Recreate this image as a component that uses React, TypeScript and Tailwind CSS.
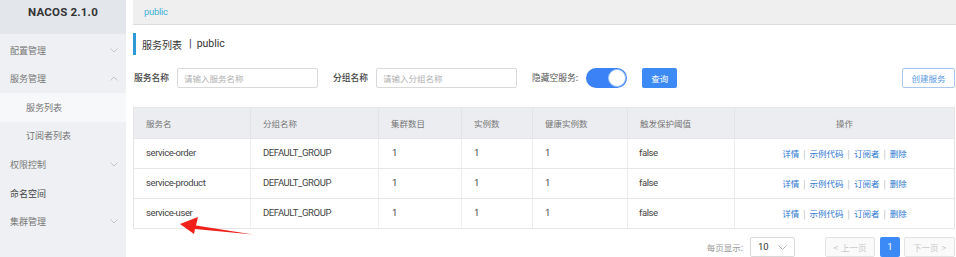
import React from "react";

const font = { fontFamily: '"Roboto", "Noto Sans CJK SC", sans-serif' };
const cjk = { fontFamily: '"Noto Sans CJK SC", sans-serif' };

function Chevron({ up = false }: { up?: boolean }) {
  return (
    <svg width="8" height="5" viewBox="0 0 8 5" className="text-[#bcc1c8]">
      {up ? (
        <path d="M0.5 4.5 L4 1 L7.5 4.5" fill="none" stroke="currentColor" strokeWidth="0.9" />
      ) : (
        <path d="M0.5 0.5 L4 4 L7.5 0.5" fill="none" stroke="currentColor" strokeWidth="0.9" />
      )}
    </svg>
  );
}

const menu: { label: string; chevron?: "up" | "down"; sub?: boolean; active?: boolean }[] = [
  { label: "配置管理", chevron: "down" },
  { label: "服务管理", chevron: "up" },
  { label: "服务列表", sub: true, active: true },
  { label: "订阅者列表", sub: true },
  { label: "权限控制", chevron: "down" },
  { label: "命名空间" },
  { label: "集群管理", chevron: "down" },
];

const cols = [
  { t: "服务名", w: "w-[117px]" },
  { t: "分组名称", w: "w-[128px]" },
  { t: "集群数目", w: "w-[83px]" },
  { t: "实例数", w: "w-[71px]" },
  { t: "健康实例数", w: "w-[95px]" },
  { t: "触发保护阈值", w: "w-[107px]" },
  { t: "操作", w: "w-[219px]" },
];

const rows = ["service-order", "service-product", "service-user"];

export default function App() {
  return (
    <div className="relative w-[956px] h-[257px] overflow-hidden bg-white flex text-[9.5px] text-[#333]" style={font}>
      <aside className="w-[126px] h-full bg-[#eef0f3] flex flex-col shrink-0">
        <div className="h-[34px] bg-[#e3e6eb] flex items-center justify-center pb-[9px]">
          <span className="text-[11.5px] font-bold text-[#333] tracking-[0.2px]">NACOS 2.1.0</span>
        </div>
        <div className="flex flex-col pt-[2px]" style={cjk}>
          {menu.map((m) => (
            <div
              key={m.label}
              className={`h-[28.6px] flex items-center justify-between pr-[8px] text-[9px] ${m.sub ? "pl-[26px]" : "pl-[10px]"} ${m.active ? "bg-[#f7f8fa]" : ""} ${m.label === "命名空间" ? "text-[#444]" : "text-[#777]"}`}
            >
              <span>{m.label}</span>
              {m.chevron && <Chevron up={m.chevron === "up"} />}
            </div>
          ))}
        </div>
      </aside>

      <main className="flex-1 pl-[7px] flex flex-col">
        <div className="h-[26px] bg-[#efefef] border-b border-[#dcdcdc] flex items-center pl-[11px]">
          <span className="text-[9.5px] tracking-[-0.3px] text-[#3eb4d9]">public</span>
        </div>
        <div className="pr-[3px] flex flex-col">
          <div className="mt-[8px] h-[22px] border-l-[3px] border-[#2c9ad6] pl-[6px] flex items-center text-[#333]">
            <span className="text-[10px]" style={cjk}>服务列表</span>
            <span className="text-[11px] ml-[7px]">|</span>
            <span className="text-[10.5px] ml-[5px]">public</span>
          </div>

          <div className="mt-[13px] h-[20px] flex items-center" style={cjk}>
            <span className="ml-[1px] text-[#444] text-[8.75px] font-medium">服务名称</span>
            <div className="ml-[8px] w-[141px] h-[20px] border border-[#d9d9d9] rounded-[2px] flex items-center pl-[6px] text-[8.5px] text-[#b0b0b0]">
              请输入服务名称
            </div>
            <span className="ml-[15px] text-[#444] text-[8.75px] font-medium">分组名称</span>
            <div className="ml-[8px] w-[141px] h-[20px] border border-[#d9d9d9] rounded-[2px] flex items-center pl-[6px] text-[8.5px] text-[#b0b0b0]">
              请输入分组名称
            </div>
            <span className="ml-[15px] text-[#555] text-[8.75px]">隐藏空服务:</span>
            <div className="ml-[8px] w-[41px] h-[20px] rounded-full bg-[#3b82f6] relative">
              <div className="absolute right-[1px] top-[1px] w-[18px] h-[18px] rounded-full bg-white border border-[#9cc2f7]" />
            </div>
            <div className="ml-[15px] w-[35px] h-[20px] bg-[#3c8af6] rounded-[2px] text-white text-[8.5px] flex items-center justify-center">
              查询
            </div>
            <div className="ml-auto w-[53px] h-[20px] border border-[#a9c8ef] rounded-[2px] text-[#5a9ae0] text-[8.5px] flex items-center justify-center">
              创建服务
            </div>
          </div>

          <div className="mt-[19px] border border-[#e6e6e6]">
            <div className="flex h-[30px] bg-[#ebedf0] text-[#777] text-[8.5px]" style={cjk}>
              {cols.map((c, i) => (
                <div
                  key={c.t}
                  className={`${c.w} flex items-center ${i === 6 ? "justify-center" : "pl-[12px]"} ${i < 6 ? "border-r border-[#e2e4e8]" : ""}`}
                >
                  {c.t}
                </div>
              ))}
            </div>
            {rows.map((r) => (
              <div key={r} className="flex h-[30px] border-t border-[#e6e6e6] text-[#444] text-[9.5px] tracking-[-0.4px]">
                <div className="w-[117px] pl-[12px] flex items-center border-r border-[#ececec]">{r}</div>
                <div className="w-[128px] pl-[12px] flex items-center border-r border-[#ececec]">DEFAULT_GROUP</div>
                <div className="w-[83px] pl-[13px] flex items-center border-r border-[#ececec]">1</div>
                <div className="w-[71px] pl-[12px] flex items-center border-r border-[#ececec]">1</div>
                <div className="w-[95px] pl-[12px] flex items-center border-r border-[#ececec]">1</div>
                <div className="w-[107px] pl-[11px] flex items-center border-r border-[#ececec]">false</div>
                <div className="w-[219px] flex items-center justify-center text-[8.5px] tracking-normal" style={cjk}>
                  <span className="text-[#2d78d0]">详情</span>
                  <span className="text-[#aaa] mx-[4px]">|</span>
                  <span className="text-[#2d78d0]">示例代码</span>
                  <span className="text-[#aaa] mx-[4px]">|</span>
                  <span className="text-[#2d78d0]">订阅者</span>
                  <span className="text-[#aaa] mx-[4px]">|</span>
                  <span className="text-[#2d78d0]">删除</span>
                </div>
              </div>
            ))}
          </div>

          <div className="mt-[8px] h-[20px] flex items-center justify-end text-[8.5px]" style={cjk}>
            <span className="text-[#999]">每页显示:</span>
            <div className="ml-[7px] w-[45px] h-[20px] border border-[#d9d9d9] rounded-[2px] flex items-center justify-between pl-[7px] pr-[7px] text-[#333]">
              <span className="text-[9.5px]" style={font}>10</span>
              <svg width="9" height="5" viewBox="0 0 9 5" className="text-[#aaa]">
                <path d="M0.5 0.5 L4.5 4.5 L8.5 0.5" fill="none" stroke="currentColor" strokeWidth="0.9" />
              </svg>
            </div>
            <div className="ml-[30px] w-[50px] h-[20px] border border-[#e3e3e3] bg-[#fafafa] rounded-[2px] flex items-center justify-center text-[#c8c8c8]">
              <span className="mr-[3px]">&lt;</span>上一页
            </div>
            <div className="ml-[5px] w-[20px] h-[20px] bg-[#3c8af6] rounded-[2px] text-white text-[9.5px] flex items-center justify-center" style={font}>
              1
            </div>
            <div className="ml-[4px] w-[51px] h-[20px] border border-[#e3e3e3] bg-[#fafafa] rounded-[2px] flex items-center justify-center text-[#c8c8c8]">
              下一页<span className="ml-[3px]">&gt;</span>
            </div>
          </div>
        </div>
      </main>

      <svg className="absolute left-0 top-0 pointer-events-none" width="956" height="257" viewBox="0 0 956 257">
        <polygon points="180,224 198,217 196,225.5 253,234.5 195,229 194,234" fill="#f0201a" />
      </svg>
    </div>
  );
}
